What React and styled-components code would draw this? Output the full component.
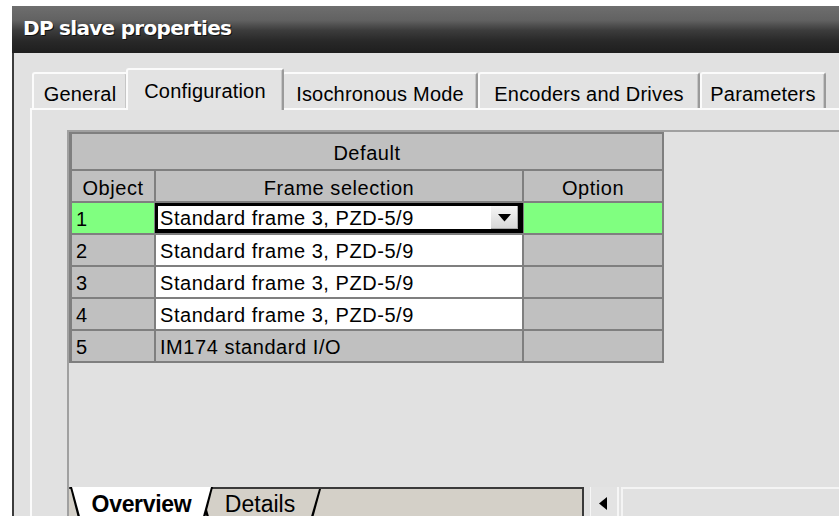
import React from 'react'
import styled, { createGlobalStyle } from 'styled-components'

const GlobalStyle = createGlobalStyle`
  html, body {
    margin: 0;
    padding: 0;
    background: #fff;
    overflow: hidden;
  }
  * { box-sizing: border-box; }
`

const tabs = [
  { label: 'General', width: 96 },
  { label: 'Configuration', width: 158, active: true },
  { label: 'Isochronous Mode', width: 196 },
  { label: 'Encoders and Drives', width: 222 },
  { label: 'Parameters', width: 126 },
]

const rows = [
  { id: 1, frame: 'Standard frame 3, PZD-5/9', editable: true, selected: true },
  { id: 2, frame: 'Standard frame 3, PZD-5/9', editable: true },
  { id: 3, frame: 'Standard frame 3, PZD-5/9', editable: true },
  { id: 4, frame: 'Standard frame 3, PZD-5/9', editable: true },
  { id: 5, frame: 'IM174 standard I/O' },
]

const DropArrow = () => (
  <svg width="13" height="8" viewBox="0 0 13 8">
    <path d="M0 0 H13 L6.5 7.5 Z" fill="#000" />
  </svg>
)

const LeftArrow = () => (
  <svg width="8" height="13" viewBox="0 0 8 13">
    <path d="M8 0 V13 L0 6.5 Z" fill="#000" />
  </svg>
)

export default function App() {
  return (
    <>
      <GlobalStyle />
      <Screen>
        <Window>
          <TitleBar>
            <Title>DP slave properties</Title>
          </TitleBar>
          <Body>
            <TabStrip>
              {tabs.map(t => (
                <Tab key={t.label} $active={t.active} $width={t.width}>
                  {t.label}
                </Tab>
              ))}
            </TabStrip>
            <TabPage>
              <GridArea>
                <Grid>
                  <HeadCell $span={3}>Default</HeadCell>
                  <HeadCell>Object</HeadCell>
                  <HeadCell>Frame selection</HeadCell>
                  <HeadCell>Option</HeadCell>
                  {rows.map(r => (
                    <React.Fragment key={r.id}>
                      <Cell $bg={r.selected ? '#80ff80' : '#c0c0c0'}>{r.id}</Cell>
                      {r.selected ? (
                        <ComboCell>
                          <ComboText>{r.frame}</ComboText>
                          <ComboButton><DropArrow /></ComboButton>
                        </ComboCell>
                      ) : (
                        <Cell $bg={r.editable ? '#fff' : '#c0c0c0'}>{r.frame}</Cell>
                      )}
                      <Cell $bg={r.selected ? '#80ff80' : '#c0c0c0'} />
                    </React.Fragment>
                  ))}
                </Grid>
                <SheetBar>
                  <SheetStrip>
                    <SheetTab $width={143} $active>
                      <SheetFace $active>Overview</SheetFace>
                    </SheetTab>
                    <SheetTab $width={122}>
                      <SheetFace>Details</SheetFace>
                    </SheetTab>
                  </SheetStrip>
                  <Splitter />
                  <ScrollButton><LeftArrow /></ScrollButton>
                  <ScrollTrack />
                </SheetBar>
              </GridArea>
            </TabPage>
          </Body>
        </Window>
      </Screen>
    </>
  )
}

const Screen = styled.div`
  height: 516px;
  padding: 6px 0 0 12px;
  overflow: hidden;
`

const Window = styled.div`
  display: flex;
  flex-direction: column;
  height: 100%;
`

const TitleBar = styled.div`
  height: 47px;
  flex-shrink: 0;
  display: flex;
  align-items: center;
  padding-left: 11px;
  background: linear-gradient(#6e6e6e 0%, #626262 30%, #3c3c3c 52%, #282828 75%, #1e1e1e 100%);
`

const Title = styled.span`
  font-family: "DejaVu Sans", sans-serif;
  font-weight: bold;
  font-size: 20px;
  letter-spacing: -0.7px;
  color: #fff;
  text-shadow: 1px 1px 0 #111;
  margin-top: -3px;
`

const Body = styled.div`
  flex: 1;
  display: flex;
  flex-direction: column;
  background: #e1e1e1;
  border-left: 2px solid #3c3c3c;
  padding: 15px 0 0 16px;
  font-family: "Liberation Sans", Arial, sans-serif;
  color: #000;
`

const TabStrip = styled.div`
  display: flex;
  align-items: flex-end;
  height: 40px;
  padding-left: 2px;
`

const Tab = styled.div`
  position: relative;
  width: ${p => p.$width}px;
  height: ${p => (p.$active ? 42 : 36)}px;
  margin: ${p => (p.$active ? '0 -2px -2px' : '0')};
  z-index: ${p => (p.$active ? 1 : 0)};
  padding-top: ${p => (p.$active ? 9 : 8)}px;
  text-align: center;
  font-size: 20px;
  line-height: 24px;
  letter-spacing: 0.2px;
  white-space: nowrap;
  background: #e3e3e3;
  border-top: 2px solid #fbfbfb;
  border-left: 2px solid #fbfbfb;
  border-right: 2px solid #9a9a9a;
  border-radius: 3px 3px 0 0;
  box-shadow: inset -1px 0 0 #c6c6c6;
`

const TabPage = styled.div`
  flex: 1;
  border-top: 2px solid #fbfbfb;
  border-left: 2px solid #fbfbfb;
  padding: 20px 0 0 35px;
`

const GridArea = styled.div`
  display: flex;
  flex-direction: column;
  height: 394px;
  border-top: 2px solid #a0a0a0;
  border-left: 2px solid #a0a0a0;
`

const Grid = styled.div`
  display: grid;
  grid-template-columns: 82px 366px 138px;
  grid-template-rows: 35px repeat(6, 30px);
  gap: 2px;
  width: fit-content;
  background: #7f7f7f;
  border: 2px solid #7f7f7f;
  border-left-width: 3px;
  font-size: 20px;
  letter-spacing: 0.55px;
`

const HeadCell = styled.div`
  grid-column: span ${p => p.$span || 1};
  background: #c0c0c0;
  text-align: center;
  line-height: 30px;
  padding-top: ${p => (p.$span ? 4 : 2)}px;
  white-space: nowrap;
`

const Cell = styled.div`
  background: ${p => p.$bg};
  padding: 1px 0 0 4px;
  line-height: 30px;
  white-space: nowrap;
  overflow: hidden;
`

const ComboCell = styled.div`
  display: flex;
  align-items: stretch;
  margin: 0 -1px 0 -1px;
  background: #fff;
  border: 3px solid #000;
  border-right-width: 5px;
  border-bottom-width: 4px;
  position: relative;
  z-index: 1;
`

const ComboText = styled.div`
  flex: 1;
  padding: 0 0 0 2px;
  line-height: 24px;
  white-space: nowrap;
`

const ComboButton = styled.div`
  width: 28px;
  display: flex;
  align-items: center;
  justify-content: center;
  background: linear-gradient(#f6f6f6, #d6d6d6);
  border-left: 1px solid #fff;
  box-shadow: inset -1px -1px 0 #a8a8a8;
`

const SheetBar = styled.div`
  margin-top: auto;
  height: 37px;
  flex-shrink: 0;
  display: flex;
`

const SheetStrip = styled.div`
  width: 515px;
  display: flex;
  align-items: flex-start;
  background: #d4d0c8;
  border-top: 2px solid #3a3a3a;
  border-right: 2px solid #3a3a3a;
`

const SheetTab = styled.div`
  width: ${p => p.$width}px;
  height: ${p => (p.$active ? 35 : 33)}px;
  margin: ${p => (p.$active ? '-2px 0 0 1px' : '0 0 0 -14px')};
  position: relative;
  z-index: ${p => (p.$active ? 2 : 1)};
  background: #000;
  clip-path: polygon(0 0, 100% 0, calc(100% - 9px) 100%, 9px 100%);
`

const SheetFace = styled.div`
  height: calc(100% - 2px);
  display: flex;
  justify-content: center;
  padding-top: ${p => (p.$active ? 3 : 1)}px;
  background: ${p => (p.$active ? '#fff' : '#d4d0c8')};
  clip-path: polygon(2px 0, calc(100% - 2px) 0, calc(100% - 11px) 100%, 11px 100%);
  font-size: 23px;
  font-weight: ${p => (p.$active ? 'bold' : 'normal')};
  letter-spacing: ${p => (p.$active ? '-0.3px' : '0')};
  line-height: 28px;
  white-space: nowrap;
`

const Splitter = styled.div`
  width: 7px;
  border-left: 3px solid #e1e1e1;
  border-right: 1px solid #f6f6f6;
`

const ScrollButton = styled.div`
  width: 28px;
  display: flex;
  align-items: flex-start;
  justify-content: center;
  padding: 10px 3px 0 0;
  background: #e3e3e3;
  border-right: 2px solid #f6f6f6;
`

const ScrollTrack = styled.div`
  flex: 1;
  margin-left: 2px;
  border-top: 2px solid #f4f4f4;
  border-left: 2px solid #f4f4f4;
  background: #e1e1e1;
`
